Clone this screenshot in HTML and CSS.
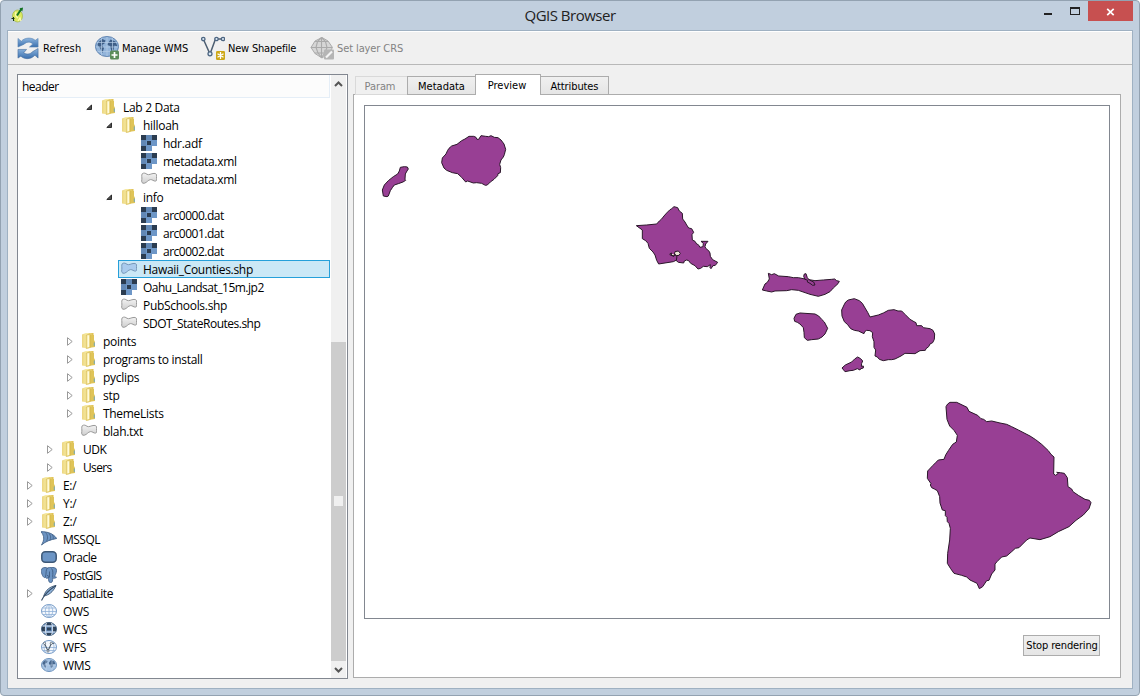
FILE: index.html
```
<!DOCTYPE html>
<html lang="en">
<head>
<meta charset="utf-8">
<title>QGIS Browser</title>
<link rel="stylesheet" href="styles.css">
</head>
<body>
<svg class="defs" width="0" height="0">
  <defs>
    <linearGradient id="gold" x1="0" x2="1"><stop offset="0" stop-color="#ecd680"/><stop offset=".45" stop-color="#f8eda8"/><stop offset="1" stop-color="#dcbc4a"/></linearGradient>
    <linearGradient id="grey" x1="0" y1="0" x2="0" y2="1"><stop offset="0" stop-color="#f2f2f2"/><stop offset="1" stop-color="#cfcfcf"/></linearGradient>
    <linearGradient id="sync" x1="0" y1="0" x2="0" y2="1"><stop offset="0" stop-color="#8db5de"/><stop offset="1" stop-color="#3a6fae"/></linearGradient>
    <symbol id="folder" viewBox="0 0 16 16">
      <path d="M1 1.500L5 0h7.500v13L7 15.500l-6-1z" fill="url(#gold)"/>
      <path d="M9 2h4v5l1 2v5l-5 .8z" fill="#dfc458"/>
      <path d="M5.300 2l3.700-1v13.500l-3.700 1z" fill="#f6e8a0" stroke="#d0b048" stroke-width=".6"/>
      <path d="M7.300 2.500v11.500" stroke="#fffbe0" stroke-width="1.300"/>
      <path d="M13.300 9.500v3.500" stroke="#74a9bd" stroke-width="1"/>
    </symbol>
    <symbol id="raster" viewBox="0 0 16 16" shape-rendering="crispEdges">
      <path d="M0 0h16v11h-5v5H0z" fill="#6e97c7"/>
      <path d="M5 0h6v5H5zM0 5h5v6H0z" fill="#6288b5"/>
      <path d="M0 0h5v5H0zM11 0h5v5h-5zM0 11h5v5H0z" fill="#2b3c50"/>
      <path d="M6 6h4v4H6z" fill="#2b3c50"/>
    </symbol>
    <symbol id="vector" viewBox="0 0 16 16">
      <path d="M1.200 2.800C3 1.500 4.500 2.200 6 3.300c2 1.200 4-.8 7-.9 2.500 0 2.600 1 2.500 3 0 3 .5 4.500-1 4.700-2 .2-3-1.700-5-1.500C7 8.900 6 11.500 3.500 12.200 1 12.800.3 11 .8 8.500 1.200 6.500.2 4.500 1.200 2.800z" fill="url(#grey)" stroke="#999" stroke-width="1"/>
    </symbol>
    <symbol id="vector-sel" viewBox="0 0 16 16">
      <path d="M1.200 2.800C3 1.500 4.500 2.200 6 3.300c2 1.200 4-.8 7-.9 2.500 0 2.600 1 2.500 3 0 3 .5 4.500-1 4.700-2 .2-3-1.700-5-1.500C7 8.900 6 11.500 3.500 12.200 1 12.800.3 11 .8 8.500 1.200 6.500.2 4.500 1.200 2.800z" fill="#a9cbed" stroke="#7597b8" stroke-width="1"/>
    </symbol>
    <symbol id="mssql" viewBox="0 0 16 16">
      <path d="M0 .5C7 .5 12 2.500 16 7.500 11 8.500 5 10 .5 14 3.500 9 3.500 5 0 .5z" fill="#6c94c3"/>
      <path d="M0 .7C7 .7 12 2.500 15.700 7.500 10 8.500 5 10 .5 14 3.500 9 3.500 5 0 .7zM4.500 1.300c2.500 3 2.500 6 1 9M8 2.300c2 2.500 2 4.500 1 7M11.500 4c1 1.500 1 3 .5 4.300" fill="none" stroke="#46658a" stroke-width=".9"/>
    </symbol>
    <symbol id="oracle" viewBox="0 0 16 16"><rect x=".8" y="2.800" width="14.400" height="10.400" rx="3.500" fill="#6c95c5" stroke="#3d5877" stroke-width="1.500"/></symbol>
    <symbol id="postgis" viewBox="0 0 16 16">
      <path d="M1 1.500C3 0 5 .5 6.500 1 9 0 13 0 15 1.500c1.500 2-.5 6-1.500 8l2 .8c-1.500 1.200-3 1-3.800.7 0 2 0 4.500-2 4.700-2.200 0-2-3-2.500-5C6 11.500 5 11.500 4.500 10.500 2 11.500.2 6 .3 3.500z" fill="#6c94c3" stroke="#48678d" stroke-width=".9"/>
      <path d="M6.500 1c-2 2-1 5-2 9M6 8.500c2 0 2 1 1.500 2.500M10.500 1.500c2 2 1.200 5 1.200 9M8.500 4.500v6" fill="none" stroke="#3f5e83" stroke-width=".9"/>
    </symbol>
    <symbol id="feather" viewBox="0 0 16 16">
      <path d="M15 .5C9 1.500 4.500 5 2.800 11c5-1 9-3.500 12.200-10.500z" fill="#8fb3db" stroke="#3f5772" stroke-width=".9"/>
      <path d="M15 .5C8 5 3 10 .5 15.500" fill="none" stroke="#344a63" stroke-width="1.100"/>
    </symbol>
    <symbol id="ows" viewBox="0 0 16 16">
      <ellipse cx="8" cy="8" rx="7.500" ry="6.500" fill="#f4f8fd" stroke="#7399c6"/>
      <path d="M1.500 5h13M.5 8.500h15M2 11.500h12M8 1.500v13M8 1.500c-5 3-5 10 0 13M8 1.500c5 3 5 10 0 13" fill="none" stroke="#8fb0d7" stroke-width=".8"/>
    </symbol>
    <symbol id="wcs" viewBox="0 0 16 16">
      <ellipse cx="8" cy="8" rx="7.500" ry="6.500" fill="#6f97c7" stroke="#42607f"/>
      <path d="M1 5.500h3.500v5H1zM11.500 5.500H15v5h-3.500zM5 1.800h6v2.400H5zM5 12h6v2H5zM6 6.500h4v3H6z" fill="#2f4259"/>
      <path d="M5.500 2c-1.500 3-1.500 9 0 12M10.500 2c1.500 3 1.500 9 0 12M1.500 5h13M1.500 11h13" fill="none" stroke="#dce7f3" stroke-width=".9"/>
    </symbol>
    <symbol id="wfs" viewBox="0 0 16 16">
      <ellipse cx="8" cy="8" rx="7.500" ry="6.500" fill="#f4f8fd" stroke="#7399c6"/>
      <path d="M.5 8.500h15M2 11.500h12M11.500 2.500c2 4 2 7 0 11M4.500 2.500c-2 4-2 7 0 11" fill="none" stroke="#8fb0d7" stroke-width=".8"/>
      <path d="M3.500 4.500L7 12l3.300-7.500 3-.3" fill="none" stroke="#4b5a69" stroke-width="1.100"/>
      <g fill="#fff" stroke="#4b5a69" stroke-width=".7"><circle cx="3.500" cy="4.300" r="1.100"/><circle cx="7" cy="12" r="1.100"/><circle cx="10.300" cy="4.300" r="1.100"/></g>
    </symbol>
    <symbol id="wms" viewBox="0 0 16 16">
      <ellipse cx="8" cy="8" rx="7.500" ry="6.500" fill="#a6c3e3" stroke="#6c92bd"/>
      <path d="M2 5l2.500-2 2 1-.5 1.700-2 1 1.300 2L4.500 11 3 8.800 1.500 7zM8 5.500l2-2.500 3.500 1.500 1 3-2-.5-1 3-1.500 1-.7-3L8 7.500z" fill="#48688f"/>
      <path d="M5 2v12M11 2v12M1 8h14" stroke="#c9dbee" stroke-width=".5"/>
    </symbol>
    <symbol id="closed" viewBox="0 0 9 9"><path d="M2.500.7l4.700 3.800-4.700 3.800z" fill="#fff" stroke="#999" stroke-width="1"/></symbol>
    <symbol id="open" viewBox="0 0 9 9"><path d="M6.500 2v4.500H1.800z" fill="#505050" stroke="#202020" stroke-width=".9"/></symbol>
  </defs>
</svg>

<div class="window">
  <header class="titlebar">
    <svg class="app-icon" viewBox="0 0 16 16">
      <ellipse cx="6.500" cy="9" rx="5" ry="6" fill="#dbe95f" stroke="#a6b955" stroke-width=".8"/>
      <path d="M5 5c-1 3 0 5 2 6M7 14l2-3 1 3" fill="none" stroke="#fafbb0" stroke-width="1.300"/>
      <path d="M10.800 1.200L6 8.500" stroke="#147622" stroke-width="2"/><path d="M8.500 1.500L12 .5l-.7 4z" fill="#107020"/>
      <path d="M.5 11.500h3M2.500 10v4" stroke="#173515" stroke-width="1"/>
    </svg>
    <h1 class="title">QGIS Browser</h1>
    <div class="controls">
      <svg class="ctl-icons" viewBox="0 0 54 30" shape-rendering="crispEdges"><path d="M10 13h8v2h-8z" fill="#222"/><path d="M36 7h10v8H36z" fill="#222"/><path d="M37 9h8v5h-8z" fill="#c1cfde"/></svg>
      <div class="close"><svg viewBox="0 0 9 8"><path d="M1.200.8l6.500 6.400M7.700.8L1.200 7.200" stroke="#fff" stroke-width="1.700"/></svg></div>
    </div>
  </header>

  <div class="client">
    <nav class="toolbar">
      <div class="tool refresh">
        <svg viewBox="0 0 24 24">
          <path d="M1 11V2l3.500 3C8 1 15 .500 19 4l3-2v9h-9l3.500-3.300C13.500 5 9.500 5.500 7.500 8z" fill="url(#sync)" stroke="#5681b1" stroke-width=".6"/>
          <path d="M22 12.500v10l-3.300-3C14 24.500 7.500 23.800 4 20.500L1 22.500v-9h9l-3 3.500c3 2.200 7 1.500 9-1z" fill="url(#sync)" stroke="#40699a" stroke-width=".6"/>
        </svg><span>Refresh</span>
      </div>
      <div class="tool wms">
        <svg viewBox="0 0 24 24">
          <ellipse cx="12" cy="10.500" rx="11.500" ry="10" fill="#92b4da" stroke="#5d82b0"/>
          <path d="M3.500 6l4-3 3 1.500-1 3-2.500 1.500 2 3-1.500 5L5 12 2.500 9zM12.500 8l3-4.500 5 2 2 5-3-1-1 4.500-2 1.500-1.500-5.500-2.500-1z" fill="#3f5f88"/>
          <path d="M6.500 2v17M12 .8v19.500M17.500 2v17M1.500 6.500h21M1 11h22M2.500 15.500h19" stroke="#b5cde7" stroke-width=".7" fill="none"/>
          <rect x="15" y="14.500" width="9" height="9" rx="1.500" fill="#5a8c5a"/><path d="M19.500 16v6M16.500 19h6" stroke="#fff" stroke-width="1.700"/>
        </svg><span>Manage WMS</span>
      </div>
      <div class="tool shape">
        <svg viewBox="0 0 24 24">
          <path d="M2.500 3.500L9 18l5.500-15H22" fill="none" stroke="#4d5e71" stroke-width="1.500"/>
          <g fill="#dce9f6" stroke="#4d6682" stroke-width="1.300"><circle cx="2.300" cy="3" r="1.700"/><circle cx="15.500" cy="3" r="1.700"/><circle cx="22" cy="3" r="1.700"/><circle cx="9" cy="17.800" r="2"/></g>
          <rect x="15" y="15" width="9" height="9" rx="1.300" fill="#cda718"/><path d="M19.500 16v7M16.500 17.700l6 3.500M22.500 17.700l-6 3.500" stroke="#fff" stroke-width="1.300"/>
        </svg><span>New Shapefile</span>
      </div>
      <div class="tool crs disabled">
        <svg viewBox="0 0 24 24">
          <path d="M1 11.500L5 5l7-3.500L18 5l4.500 6.500L19 17l-7 5-7-4.500z" fill="#d6d6d6" stroke="#aaa"/>
          <path d="M1 11.500h21M5 5.500h13M4.500 17h14M11.500 1.500v20M11.500 1.500L7.500 5.500l-1.500 6 2 5.500 3.500 4.500M11.500 1.500l4 4 1.500 6-2 5.500-3.500 4.500" fill="none" stroke="#aaa" stroke-width="1.100"/>
          <rect x="14" y="13.500" width="10" height="10" rx="1" fill="#b5b5b5"/><path d="M16 21.500l6-6" stroke="#f4f4f4" stroke-width="2.200"/>
        </svg><span>Set layer CRS</span>
      </div>
    </nav>

    <main class="content">
      <section class="tree">
        <div class="tree-main">
          <div class="tree-head">header</div>
          <div class="row l3"><svg class="arrow"><use href="#open"/></svg><div class="item"><svg><use href="#folder"/></svg><span>Lab 2 Data</span></div></div>
          <div class="row l4"><svg class="arrow"><use href="#open"/></svg><div class="item"><svg><use href="#folder"/></svg><span>hilloah</span></div></div>
          <div class="row l5"><i class="arrow"></i><div class="item"><svg><use href="#raster"/></svg><span>hdr.adf</span></div></div>
          <div class="row l5"><i class="arrow"></i><div class="item"><svg><use href="#raster"/></svg><span>metadata.xml</span></div></div>
          <div class="row l5"><i class="arrow"></i><div class="item"><svg><use href="#vector"/></svg><span>metadata.xml</span></div></div>
          <div class="row l4"><svg class="arrow"><use href="#open"/></svg><div class="item"><svg><use href="#folder"/></svg><span>info</span></div></div>
          <div class="row l5"><i class="arrow"></i><div class="item"><svg><use href="#raster"/></svg><span class="tight">arc0000.dat</span></div></div>
          <div class="row l5"><i class="arrow"></i><div class="item"><svg><use href="#raster"/></svg><span class="tight">arc0001.dat</span></div></div>
          <div class="row l5"><i class="arrow"></i><div class="item"><svg><use href="#raster"/></svg><span class="tight">arc0002.dat</span></div></div>
          <div class="row l4"><i class="arrow"></i><div class="item selected"><svg><use href="#vector-sel"/></svg><span>Hawaii_Counties.shp</span></div></div>
          <div class="row l4"><i class="arrow"></i><div class="item"><svg><use href="#raster"/></svg><span class="tight">Oahu_Landsat_15m.jp2</span></div></div>
          <div class="row l4"><i class="arrow"></i><div class="item"><svg><use href="#vector"/></svg><span>PubSchools.shp</span></div></div>
          <div class="row l4"><i class="arrow"></i><div class="item"><svg><use href="#vector"/></svg><span class="tight">SDOT_StateRoutes.shp</span></div></div>
          <div class="row l2"><svg class="arrow"><use href="#closed"/></svg><div class="item"><svg><use href="#folder"/></svg><span>points</span></div></div>
          <div class="row l2"><svg class="arrow"><use href="#closed"/></svg><div class="item"><svg><use href="#folder"/></svg><span>programs to install</span></div></div>
          <div class="row l2"><svg class="arrow"><use href="#closed"/></svg><div class="item"><svg><use href="#folder"/></svg><span>pyclips</span></div></div>
          <div class="row l2"><svg class="arrow"><use href="#closed"/></svg><div class="item"><svg><use href="#folder"/></svg><span>stp</span></div></div>
          <div class="row l2"><svg class="arrow"><use href="#closed"/></svg><div class="item"><svg><use href="#folder"/></svg><span>ThemeLists</span></div></div>
          <div class="row l2"><i class="arrow"></i><div class="item"><svg><use href="#vector"/></svg><span>blah.txt</span></div></div>
          <div class="row l1"><svg class="arrow"><use href="#closed"/></svg><div class="item"><svg><use href="#folder"/></svg><span class="tight">UDK</span></div></div>
          <div class="row l1"><svg class="arrow"><use href="#closed"/></svg><div class="item"><svg><use href="#folder"/></svg><span class="tighter">Users</span></div></div>
          <div class="row l0"><svg class="arrow"><use href="#closed"/></svg><div class="item"><svg><use href="#folder"/></svg><span>E:/</span></div></div>
          <div class="row l0"><svg class="arrow"><use href="#closed"/></svg><div class="item"><svg><use href="#folder"/></svg><span>Y:/</span></div></div>
          <div class="row l0"><svg class="arrow"><use href="#closed"/></svg><div class="item"><svg><use href="#folder"/></svg><span>Z:/</span></div></div>
          <div class="row l0"><i class="arrow"></i><div class="item"><svg><use href="#mssql"/></svg><span class="tight">MSSQL</span></div></div>
          <div class="row l0"><i class="arrow"></i><div class="item"><svg><use href="#oracle"/></svg><span class="tight">Oracle</span></div></div>
          <div class="row l0"><i class="arrow"></i><div class="item"><svg><use href="#postgis"/></svg><span class="tighter">PostGIS</span></div></div>
          <div class="row l0"><svg class="arrow"><use href="#closed"/></svg><div class="item"><svg><use href="#feather"/></svg><span class="tight">SpatiaLite</span></div></div>
          <div class="row l0"><i class="arrow"></i><div class="item"><svg><use href="#ows"/></svg><span>OWS</span></div></div>
          <div class="row l0"><i class="arrow"></i><div class="item"><svg><use href="#wcs"/></svg><span>WCS</span></div></div>
          <div class="row l0"><i class="arrow"></i><div class="item"><svg><use href="#wfs"/></svg><span>WFS</span></div></div>
          <div class="row l0"><i class="arrow"></i><div class="item"><svg><use href="#wms"/></svg><span>WMS</span></div></div>
        </div>
        <div class="scrollbar">
          <svg class="sb-btn" viewBox="0 0 15 17"><path d="M4 11l3.500-3.500L11 11" fill="none" stroke="#555" stroke-width="2"/></svg>
          <div class="sb-track"></div>
          <div class="sb-thumb"><i></i></div>
          <svg class="sb-btn" viewBox="0 0 15 17"><path d="M4 7l3.500 3.500L11 7" fill="none" stroke="#555" stroke-width="2"/></svg>
        </div>
      </section>

      <section class="side">
        <div class="tabs">
          <div class="tab off">Param</div>
          <div class="tab meta">Metadata</div>
          <div class="tab active">Preview</div>
          <div class="tab attr">Attributes</div>
        </div>
        <div class="pane">
          <svg class="map" viewBox="365 106 744 512">
            <g transform="translate(345 70) scale(.33333)">
              <path d="M115 378L112 360 118 345 130 332 145 320 158 312 163 303 166 292 178 290 187 291 190 297 186 303 181 312 180 328 182 331 174 336 160 341 148 345 142 353 136 362 130 378 126 380z"/>
              <path d="M290 278L292 264 303 252 308 241 312 235 320 228 336 223 350 212 360 207 372 199 386 199 393 202 396 208 401 208 408 197 422 199 431 200 438 197 448 202 459 203 468 210 477 222 482 238 478 254 475 261 468 270 464 283 467 293 466 308 459 311 458 317 447 328 436 336 427 345 421 346 410 340 395 338 385 339 368 333 362 336 350 322 338 311 322 308 305 301 297 294z"/>
            </g>
            <g transform="translate(620 195) scale(.33333)">
              <path d="M49 92L80 90 110 87 118 78 125 72 132 63 140 54 149 45 155 41 162 35 173 38 178 48 187 55 188 72 195 81 200 90 206 99 215 101 221 112 216 119 217 135 225 139 230 147 235 149 240 157 249 155 250 145 243 139 264 139 257 147 255 155 258 161 266 167 270 174 271 184 278 194 293 202 286 211 279 212 273 221 270 218 271 209 262 215 250 214 242 220 234 222 225 212 212 205 206 197 200 195 193 198 191 204 175 202 168 196 160 200 116 207 110 196 105 180 99 171 88 160 84 145 77 137 67 131 67 105z"/>
              <path class="harbor" d="M149 177L155 174 154 181 162 183 165 170 175 168 181 175 177 181 169 182 164 177"/>
              <path class="line" d="M149 179l13 5 4-4 5 4-2 12"/>
            </g>
            <g transform="translate(750 260) scale(.33333)">
              <path d="M37 90L45 72 52 67 58 57 55 40 65 44 73 41 86 48 115 50 130 53 145 53 165 57 195 62 220 60 245 58 254 57 260 62 268 64 264 71 250 84 240 95 225 103 205 109 180 103 145 91 125 89 110 92 75 93 65 96 50 93z"/>
              <path class="reef" d="M165 58L161 49 163 42 168 41 172 53 178 60 191 66 195 75 188 76 180 70 172 66 173 61z"/>
              <path d="M132 175L138 163 150 159 195 162 206 168 215 178 223 186 233 205 225 222 216 231 205 237 185 239 172 241 163 233 162 217 160 203 150 192 142 187 134 184z"/>
              <path d="M275 150L282 135 287 126 295 120 313 116 328 122 337 130 347 147 353 157 360 171 385 165 400 159 415 151 432 149 444 153 455 153 466 164 480 178 492 185 498 188 500 197 515 197 520 203 540 206 549 211 554 222 553 238 548 248 540 252 536 260 528 266 526 271 510 272 495 281 465 280 453 288 435 297 425 299 415 299 400 302 388 298 382 291 375 288 377 270 372 262 372 245 367 230 368 218 360 212 350 211 344 215 342 221 325 213 313 211 302 206 293 194 283 185 276 168z"/>
              <path d="M276 324L286 315 305 306 314 297 323 291 332 296 338 303 335 310 334 319 340 318 340 324 332 326 330 330 322 326 310 331 300 332 285 335 281 330z"/>
            </g>
            <g transform="translate(915 390) scale(.33333)">
              <path d="M93 50L98 42 105 37 125 37 150 49 156 52 162 64 188 76 198 86 206 88 215 95 230 93 255 99 275 103 290 110 310 120 345 138 362 149 380 163 400 182 408 193 417 201 416 252 422 256 430 250 425 247 436 248 448 250 457 263 459 290 470 297 474 305 490 316 510 328 523 331 528 338 522 356 505 375 483 391 462 410 430 425 405 440 375 449 345 444 335 450 323 462 312 473 301 475 290 485 275 498 260 501 247 514 240 522 240 540 230 552 222 571 215 572 203 590 193 596 186 580 165 570 155 561 140 556 117 550 107 536 97 520 98 490 104 450 106 415 102 400 97 395 96 382 91 377 91 362 82 360 75 339 74 320 67 302 58 297 50 293 46 285 48 281 37 265 38 243 53 227 63 217 70 210 87 208 92 195 100 182 113 163 124 156 127 136 117 121 104 108 96 88z"/>
            </g>
          </svg>
          <button class="stop">Stop rendering</button>
        </div>
      </section>
    </main>
  </div>
</div>
</body>
</html>
```
FILE: styles.css
```
* { box-sizing: border-box; }
body { margin: 0; background: #fff; color: #000; font-family: "DejaVu Sans Condensed", "DejaVu Sans", sans-serif; font-size: 11px; }
svg { display: block; flex: none; }
.defs { position: absolute; }
.window { width: 1140px; height: 696px; padding: 0 6px 6px; background: #c1cfde; border: 1px solid #93a2b1; border-radius: 4px; }
.titlebar { height: 29px; display: grid; grid-template-columns: 128px 1fr 128px; }
.app-icon { width: 16px; height: 16px; margin: 6px 0 0 4px; }
.title { margin: 0; text-align: center; font: 15px/29px "Open Sans", sans-serif; letter-spacing: -0.5px; color: #222; }
.controls { display: flex; justify-content: flex-end; }
.ctl-icons { width: 54px; height: 30px; margin-top: -1px; }
.close { width: 45px; height: 20px; background: #c75050; display: flex; align-items: center; justify-content: center; padding-top: 1px; }
.close svg { width: 9px; height: 8px; }
.client { height: 659px; background: #f0f0f0; border: 1px solid #9fb1c2; box-shadow: inset 0 1px #fff; }
.toolbar { height: 34px; border-bottom: 1px solid #b8b8b8; display: flex; padding-left: 9px; }
.tool { display: flex; height: 34px; line-height: 35px; white-space: nowrap; }
.tool svg { width: 24px; height: 24px; margin-top: 5px; }
.tool span { margin-left: 3px; }
.refresh { width: 78px; }
.wms { width: 106px; }
.shape { width: 109px; }
.refresh svg { width: 23px; }
.refresh span { letter-spacing: 0.15px; }
.wms span { letter-spacing: -0.1px; }
.shape span { letter-spacing: -0.2px; }
.disabled { color: #838383; }
.crs span { letter-spacing: -0.1px; }
.content { display: flex; padding: 9px 12px 0 9px; gap: 5px; }
.tree { width: 331px; height: 605px; border: 1px solid #828790; background: #fff; display: flex; flex: none; }
.tree-main { flex: 1; font: 12px "Open Sans", sans-serif; letter-spacing: -0.3px; }
.tree-head { width: 312px; height: 23px; line-height: 23px; padding-left: 4px; background: #fcfcfc; border: solid #e5eef7; border-width: 0 1px 1px 0; letter-spacing: -0.5px; }
.row { height: 18px; display: flex; white-space: nowrap; }
.arrow { width: 9px; height: 9px; margin: 5px 5px 0 0; flex: none; }
.l0 { padding-left: 7px; }
.l1 { padding-left: 27px; }
.l2 { padding-left: 47px; }
.l3 { padding-left: 67px; }
.l4 { padding-left: 87px; }
.l5 { padding-left: 107px; }
.item { display: flex; height: 18px; padding-left: 2px; margin-right: 1px; }
.item svg { width: 16px; height: 16px; margin: 1px 6px 0 0; }
.item span { line-height: 19px; }
.item .tight { letter-spacing: -0.5px; }
.item .tighter { letter-spacing: -0.65px; }
.selected { flex: 1; margin-left: -1px; border: 1px solid #26a0da; background: #cbe8f6; }
.selected svg { margin-top: 0; }
.selected span { line-height: 17px; }
.scrollbar { width: 16px; padding-right: 1px; display: flex; flex-direction: column; }
.sb-btn { width: 15px; height: 17px; background: #f0f0f0; }
.sb-track { height: 250px; background: #f0f0f0; }
.sb-thumb { flex: 1; background: #cdcdcd; display: flex; justify-content: center; align-items: center; padding-bottom: 2px; }
.sb-thumb i { width: 9px; height: 10px; background: #f0f0f0; }
.side { flex: 1; }
.tabs { height: 21px; display: flex; align-items: flex-end; padding-left: 2px; margin-bottom: -1px; }
.tab { height: 19px; border: 1px solid #acacac; border-right: 0; background: linear-gradient(#f0f0f0, #e5e5e5); text-align: center; line-height: 19px; white-space: nowrap; }
.off { width: 52px; padding-right: 3px; color: #838383; border-color: #d9d9d9; background: #f0f0f0; letter-spacing: -0.1px; }
.meta { width: 69px; padding-right: 1px; }
.active { width: 66px; height: 21px; background: #fff; border-bottom: 0; border-right: 1px solid #acacac; position: relative; line-height: 21px; margin-left: -1px; padding-right: 2px; }
.attr { width: 68px; border-left: 0; border-right: 1px solid #acacac; letter-spacing: -0.1px; }
.pane { height: 584px; background: #fff; border: 1px solid #acacac; padding: 10px; }
.map { width: 746px; height: 514px; border: 1px solid #828790; }
.map path { fill: #983f94; stroke: #2b172a; stroke-width: 1; vector-effect: non-scaling-stroke; stroke-linejoin: round; }
.map .harbor { fill: #eee6d8; }
.map .line { fill: none; }
.map .reef { fill: #983f94; }
.stop { display: block; width: 77px; height: 21px; margin: 16px 10px 0 auto; padding: 0 0 0 1px; border: 1px solid #acacac; background: linear-gradient(#f0f0f0, #e5e5e5); font: inherit; color: #000; white-space: nowrap; line-height: 20px; letter-spacing: -0.15px; }
```
